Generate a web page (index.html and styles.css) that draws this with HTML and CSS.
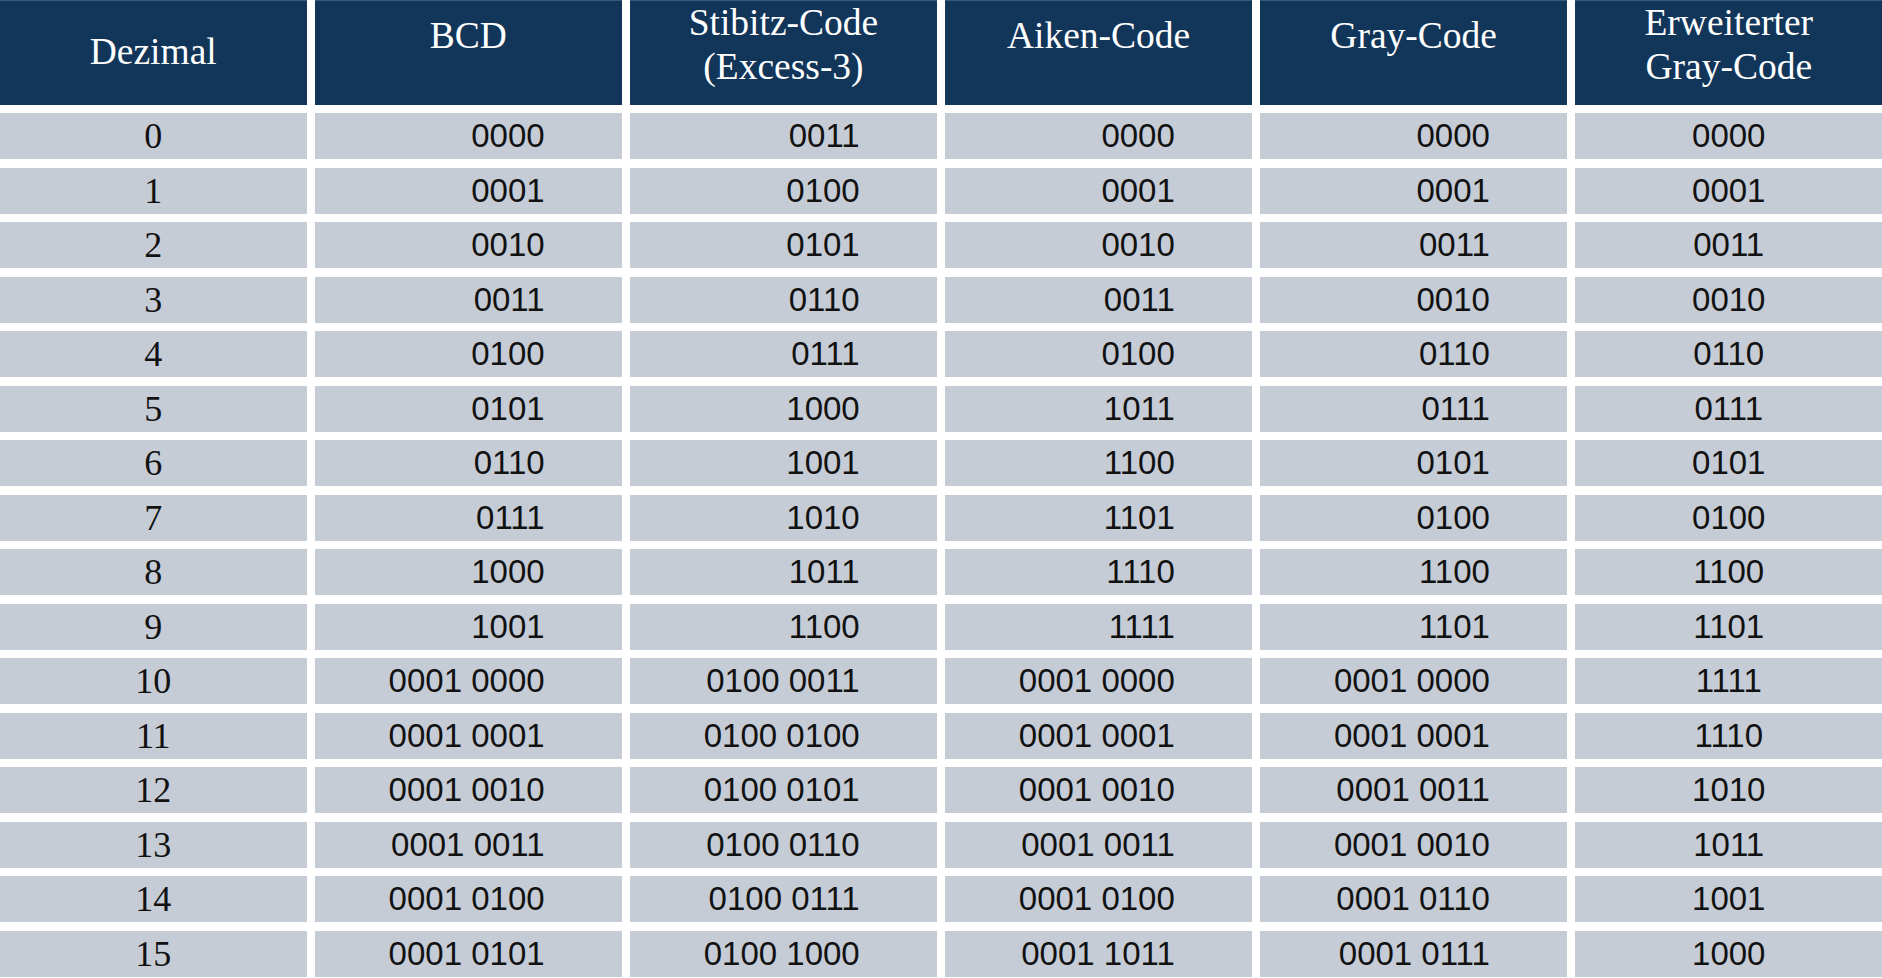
FILE: index.html
```html
<!DOCTYPE html>
<html lang="de">
<head>
<meta charset="utf-8">
<title>Codes</title>
<link rel="stylesheet" href="styles.css">
</head>
<body>
<div class="codes">
  <div class="th th-mid">Dezimal</div>
  <div class="th th-one">BCD</div>
  <div class="th th-two">Stibitz-Code<br>(Excess-3)</div>
  <div class="th th-one">Aiken-Code</div>
  <div class="th th-one">Gray-Code</div>
  <div class="th th-two">Erweiterter<br>Gray-Code</div>

  <div class="td dec">0</div><div class="td code">0000</div><div class="td code">0011</div><div class="td code">0000</div><div class="td code">0000</div><div class="td last">0000</div>
  <div class="td dec">1</div><div class="td code">0001</div><div class="td code">0100</div><div class="td code">0001</div><div class="td code">0001</div><div class="td last">0001</div>
  <div class="td dec">2</div><div class="td code">0010</div><div class="td code">0101</div><div class="td code">0010</div><div class="td code">0011</div><div class="td last">0011</div>
  <div class="td dec">3</div><div class="td code">0011</div><div class="td code">0110</div><div class="td code">0011</div><div class="td code">0010</div><div class="td last">0010</div>
  <div class="td dec">4</div><div class="td code">0100</div><div class="td code">0111</div><div class="td code">0100</div><div class="td code">0110</div><div class="td last">0110</div>
  <div class="td dec">5</div><div class="td code">0101</div><div class="td code">1000</div><div class="td code">1011</div><div class="td code">0111</div><div class="td last">0111</div>
  <div class="td dec">6</div><div class="td code">0110</div><div class="td code">1001</div><div class="td code">1100</div><div class="td code">0101</div><div class="td last">0101</div>
  <div class="td dec">7</div><div class="td code">0111</div><div class="td code">1010</div><div class="td code">1101</div><div class="td code">0100</div><div class="td last">0100</div>
  <div class="td dec">8</div><div class="td code">1000</div><div class="td code">1011</div><div class="td code">1110</div><div class="td code">1100</div><div class="td last">1100</div>
  <div class="td dec">9</div><div class="td code">1001</div><div class="td code">1100</div><div class="td code">1111</div><div class="td code">1101</div><div class="td last">1101</div>
  <div class="td dec">10</div><div class="td code">0001 0000</div><div class="td code">0100 0011</div><div class="td code">0001 0000</div><div class="td code">0001 0000</div><div class="td last">1111</div>
  <div class="td dec">11</div><div class="td code">0001 0001</div><div class="td code">0100 0100</div><div class="td code">0001 0001</div><div class="td code">0001 0001</div><div class="td last">1110</div>
  <div class="td dec">12</div><div class="td code">0001 0010</div><div class="td code">0100 0101</div><div class="td code">0001 0010</div><div class="td code">0001 0011</div><div class="td last">1010</div>
  <div class="td dec">13</div><div class="td code">0001 0011</div><div class="td code">0100 0110</div><div class="td code">0001 0011</div><div class="td code">0001 0010</div><div class="td last">1011</div>
  <div class="td dec">14</div><div class="td code">0001 0100</div><div class="td code">0100 0111</div><div class="td code">0001 0100</div><div class="td code">0001 0110</div><div class="td last">1001</div>
  <div class="td dec">15</div><div class="td code">0001 0101</div><div class="td code">0100 1000</div><div class="td code">0001 1011</div><div class="td code">0001 0111</div><div class="td last">1000</div>
</div>
</body>
</html>
```
FILE: styles.css
```css
html, body {
  margin: 0;
  padding: 0;
  background: #ffffff;
  overflow: hidden;
}

.codes {
  display: grid;
  grid-template-columns: repeat(6, 1fr);
  grid-template-rows: 104.7px repeat(16, 46px);
  column-gap: 8.6px;
  row-gap: 8.5px;
  width: 1882px;
}

.th {
  background: #12355a;
  border-top: 1px solid #3a5878;
  box-sizing: border-box;
  color: #ffffff;
  font-family: "Liberation Serif", "Times New Roman", serif;
  font-size: 37.5px;
  line-height: 44px;
  text-align: center;
}

.th-two { padding-top: 0; }
.th-one { padding-top: 13px; }
.th-mid { padding-top: 29px; }

.td {
  background: #c5ccd6;
  color: #111111;
  line-height: 46px;
  white-space: pre;
}

.dec {
  font-family: "Liberation Serif", "Times New Roman", serif;
  font-size: 36px;
  text-align: center;
}

.code {
  font-family: "Liberation Sans", Arial, sans-serif;
  font-size: 33px;
  text-align: right;
  padding-right: 77px;
}

.last {
  font-family: "Liberation Sans", Arial, sans-serif;
  font-size: 33px;
  text-align: center;
}
```
